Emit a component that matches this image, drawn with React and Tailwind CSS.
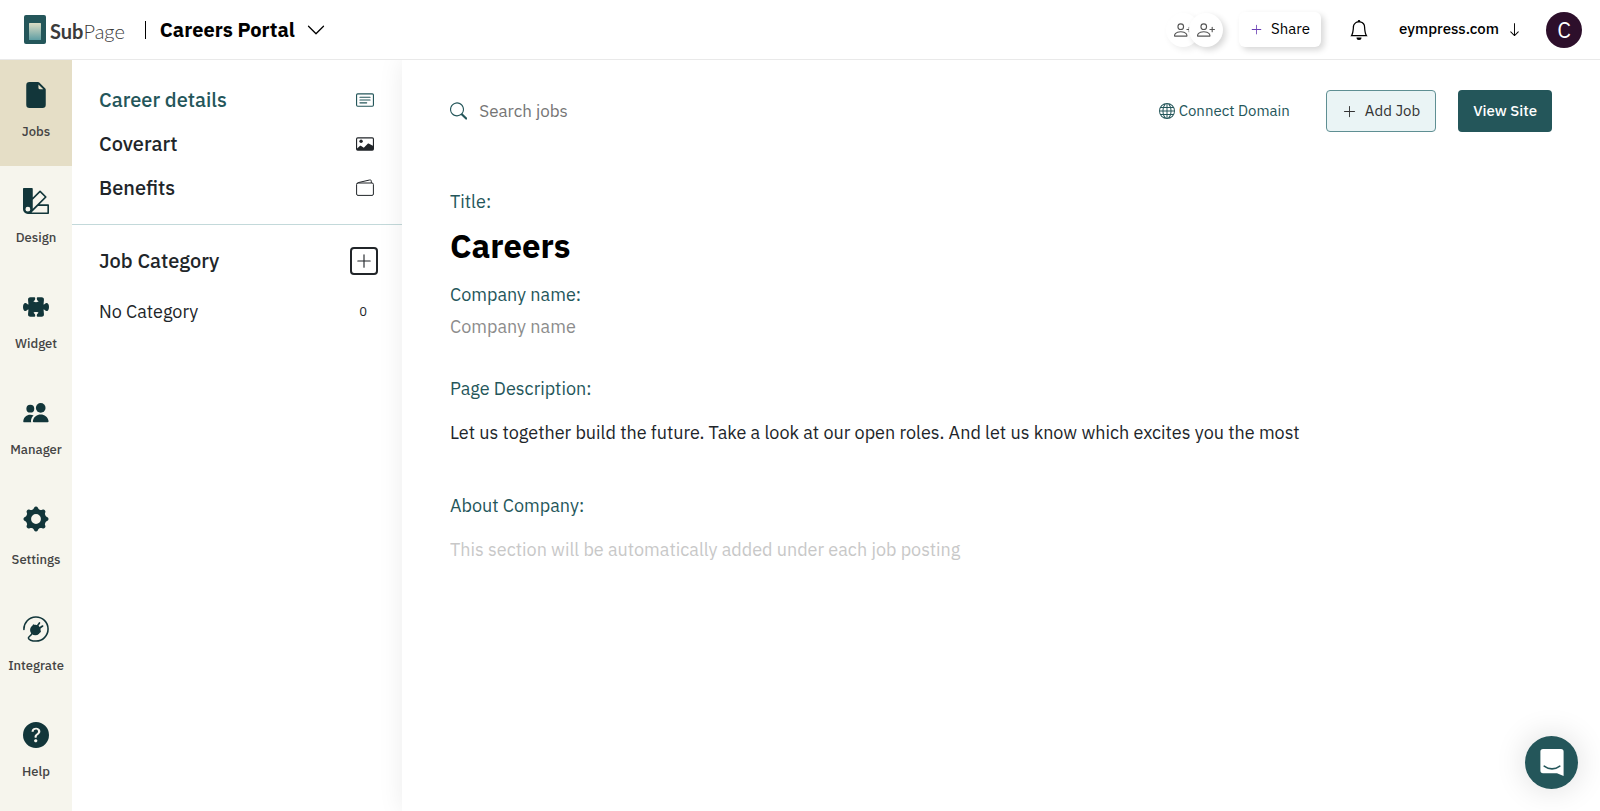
import {
  BsArrowDown,
  BsBell,
  BsCardImage,
  BsCardText,
  BsChevronDown,
  BsFileEarmarkFill,
  BsGlobe,
  BsPalette2,
  BsPersonPlus,
  BsPlusLg,
  BsPuzzleFill,
  BsQuestionCircleFill,
  BsSearch,
} from "react-icons/bs";

function Logo() {
  return (
    <a href="#" className="flex items-center gap-1 text-[#3b3b3b]">
      <svg width="22" height="29" viewBox="0 0 22 29" aria-hidden="true">
        <defs>
          <linearGradient id="page" x1="0" y1="0" x2="0" y2="1">
            <stop offset="0" stopColor="#dcdcc4" />
            <stop offset="1" stopColor="#5f9ea3" />
          </linearGradient>
        </defs>
        <rect width="22" height="29" rx="2" fill="#24565a" />
        <rect x="5" y="8" width="12" height="17" rx="0.5" fill="url(#page)" />
      </svg>
      <span className="pt-0.5 font-[Lato,sans-serif] text-xl leading-6 font-light">
        <span className="font-bold">Sub</span>Page
      </span>
    </a>
  );
}

function PeopleIcon({ className }) {
  return (
    <svg viewBox="0 0 27 27" className={className} fill="currentColor" aria-hidden="true">
      <circle cx="7.600" cy="9" r="4.100" />
      <circle cx="18.400" cy="8.200" r="5" />
      <path d="M11.200 23c-.9 0-1.100-.8-.9-1.500C11.300 17.400 14.300 15 18.400 15s7.100 2.400 8.100 6.500c.2.700 0 1.500-.9 1.500z" />
      <path d="M1.200 23c-.8 0-1.100-.7-.9-1.300C1 17.800 3.600 15.400 7.600 15.400c1.300 0 2.400.2 3.400.7c-1.600 1.400-2.500 3.300-2.700 5.300c0 .6 0 1.100.2 1.600z" />
    </svg>
  );
}

function GearIcon({ className }) {
  return (
    <svg viewBox="0 0 28 28" className={className} aria-hidden="true">
      <circle cx="14" cy="14" r="8.100" fill="none" stroke="currentColor" strokeWidth="5.600" />
      <g fill="currentColor">
        {[0, 45, 90, 135, 180, 225, 270, 315].map((angle) => (
          <path key={angle} transform={`rotate(${angle} 14 14)`} d="M9.400 5c1.600-.8 2-2.200 2.700-3.400a2.200 2.200 0 0 1 3.800 0c.7 1.200 1.100 2.600 2.700 3.400z" />
        ))}
      </g>
    </svg>
  );
}

function PlugIcon({ className }) {
  return (
    <svg viewBox="0 0 28 28" className={className} fill="none" stroke="currentColor" strokeLinecap="round" aria-hidden="true">
      <path
        strokeWidth="1.700"
        d="M1 14.500A13 13 0 1 1 13.800 27C9.500 27 5.800 25.500 5.800 23.700c0-1.500 2.500-2 4.200-5.200"
      />
      <circle cx="13.300" cy="15" r="5.700" fill="currentColor" stroke="none" />
      <path strokeWidth="2.400" d="M11.500 10.200L18 16.700" />
      <path strokeWidth="1.800" d="M14.500 12l3.200-4.500M16.500 14l4.600-3.200" />
    </svg>
  );
}

function WalletIcon({ className }) {
  return (
    <svg viewBox="0 0 18 18" className={className} fill="none" stroke="currentColor" aria-hidden="true">
      <rect x="0.600" y="4" width="16.800" height="12.400" rx="1.400" />
      <path d="M1 4.800C1.500 3.700 2.500 3.500 4 3.200L13.500 1c1.200-.3 1.800.2 1.800 1.200v1.800" />
    </svg>
  );
}

function ChatIcon({ className }) {
  return (
    <svg viewBox="0 0 24 28" className={className} aria-hidden="true">
      <path fill="#fff" d="M3 0h18a2.600 2.600 0 0 1 2.600 2.600V27l-6.600-2.800H3A2.600 2.600 0 0 1 .4 21.600V2.600A2.600 2.600 0 0 1 3 0z" />
      <path d="M4.200 17.200c4.600 3.600 11 3.600 15.600 0" fill="none" stroke="#24565a" strokeWidth="1.600" strokeLinecap="round" />
    </svg>
  );
}

const tools = [
  { name: "Jobs", Icon: BsFileEarmarkFill, active: true },
  { name: "Design", Icon: BsPalette2 },
  { name: "Widget", Icon: BsPuzzleFill },
  { name: "Manager", Icon: PeopleIcon },
  { name: "Settings", Icon: GearIcon },
  { name: "Integrate", Icon: PlugIcon },
  { name: "Help", Icon: BsQuestionCircleFill },
];

const sections = [
  { name: "Career details", Icon: BsCardText, active: true },
  { name: "Coverart", Icon: BsCardImage },
  { name: "Benefits", Icon: WalletIcon },
];

function Header() {
  return (
    <header className="relative z-10 flex h-15 shrink-0 items-center justify-between border-b border-[#e9e9e9] bg-white pr-[18px] pl-6">
      <div className="flex items-center">
        <Logo />
        <span className="mr-[14px] ml-5 h-[18px] w-px bg-black" />
        <button className="flex items-center gap-[11px] text-xl font-bold text-black">
          Careers Portal
          <BsChevronDown className="size-5" />
        </button>
      </div>
      <div className="flex items-center">
        <div className="mr-4 flex text-[#555]">
          <button aria-label="Invite editor" className="flex size-[34px] items-center justify-center rounded-full bg-white shadow-[3px_3px_6px_rgba(0,0,0,0.08)]">
            <BsPersonPlus className="size-[18px]" />
          </button>
          <button aria-label="Invite viewer" className="-ml-[11px] flex size-[34px] items-center justify-center rounded-full bg-white shadow-[3px_3px_6px_rgba(0,0,0,0.16)]">
            <BsPersonPlus className="size-[18px]" />
          </button>
        </div>
        <button className="flex h-[35px] items-center gap-2 rounded-md bg-white px-[11px] text-[15px] text-black shadow-[3px_3px_6px_rgba(0,0,0,0.16)]">
          <BsPlusLg className="size-[13px] text-[#6a3fb5]" />
          Share
        </button>
        <button aria-label="Notifications" className="ml-7 text-black">
          <BsBell className="size-5" />
        </button>
        <button className="ml-[30px] flex items-center gap-2 text-[15px] font-medium text-black">
          eympress.com
          <BsArrowDown className="size-[15px]" />
        </button>
        <button aria-label="Account" className="ml-6 size-9 rounded-full bg-[#2d0f2b] text-[22px] leading-9 text-white">
          C
        </button>
      </div>
    </header>
  );
}

function Toolbar() {
  return (
    <nav className="w-18 shrink-0 bg-[#f6f5ed]">
      {tools.map(({ name, Icon, active }) => (
        <a
          key={name}
          href="#"
          className={`flex flex-col items-center pt-[22px] pb-6 text-[13px] leading-5 font-medium text-[#444] ${active ? "bg-[#e5dec6]" : ""}`}
        >
          <Icon className={`size-[26px] text-[#12363a] ${name === "Settings" ? "mb-[18px]" : "mb-[14px]"}`} />
          {name}
        </a>
      ))}
    </nav>
  );
}

function SidePanel() {
  return (
    <aside className="w-[330px] shrink-0">
      <ul className="flex flex-col gap-4 border-b border-[#c3d9da] pt-[26px] pr-7 pb-[22px] pl-[27px]">
        {sections.map(({ name, Icon, active }) => (
          <li key={name}>
            <a
              href="#"
              className={`flex items-center justify-between text-xl leading-7 font-medium ${active ? "text-[#24565a]" : "text-[#212529]"}`}
            >
              {name}
              <Icon className="size-[18px]" />
            </a>
          </li>
        ))}
      </ul>
      <div className="flex items-center justify-between pt-[22px] pr-6 pl-[27px] text-[#212529]">
        <h2 className="text-xl leading-7 font-medium">Job Category</h2>
        <button aria-label="Add category" className="flex size-7 items-center justify-center rounded-sm border-2 border-[#212529]">
          <BsPlusLg className="size-[18px]" />
        </button>
      </div>
      <div className="flex items-center justify-between pt-[23px] pr-[35px] pl-[27px] text-[#212529]">
        <span className="text-lg leading-7">No Category</span>
        <span className="text-[13px]">0</span>
      </div>
    </aside>
  );
}

function Main() {
  return (
    <main className="flex-1 pt-[30px] pr-12 pl-12 shadow-[0_0_24px_rgba(0,0,0,0.08)]">
      <div className="flex items-center">
        <label className="flex flex-1 items-center gap-3 text-[#24565a]">
          <BsSearch className="size-[18px]" />
          <input
            type="search"
            aria-label="Search jobs"
            placeholder="Search jobs"
            className="w-full text-[17px] leading-6 outline-none placeholder:text-[#757575]"
          />
        </label>
        <a href="#" className="mr-9 flex items-center gap-1 text-[15px] text-[#24565a]">
          <BsGlobe className="size-4" />
          Connect Domain
        </a>
        <button className="mr-[22px] flex h-[42px] items-center gap-2 rounded-sm border border-[#5f8f93] bg-[#eaf4f5] px-[15px] text-[15px] text-[#333]">
          <BsPlusLg className="size-[15px]" />
          Add Job
        </button>
        <button className="h-[42px] rounded-sm bg-[#24565a] px-[15px] text-[15px] font-medium text-white">View Site</button>
      </div>

      <form className="mt-14 flex flex-col text-lg leading-7">
        <label htmlFor="title" className="text-[#24565a]">Title:</label>
        <input id="title" defaultValue="Careers" className="mt-[5px] h-12 text-[33px] font-bold text-black outline-none" />
        <label htmlFor="company" className="mt-3 text-[#24565a]">Company name:</label>
        <input id="company" placeholder="Company name" className="mt-1 h-7 outline-none placeholder:text-[#8c8c8c]" />
        <label htmlFor="description" className="mt-[34px] text-[#24565a]">Page Description:</label>
        <textarea
          id="description"
          rows={1}
          defaultValue="Let us together build the future. Take a look at our open roles. And let us know which excites you the most"
          className="mt-4 resize-none overflow-hidden text-[#212529] outline-none"
        />
        <label htmlFor="about" className="mt-[45px] text-[#24565a]">About Company:</label>
        <textarea
          id="about"
          rows={1}
          placeholder="This section will be automatically added under each job posting"
          className="mt-4 resize-none overflow-hidden outline-none placeholder:text-[#c8c8c8]"
        />
      </form>
    </main>
  );
}

export default function App() {
  return (
    <div className="flex min-h-screen flex-col bg-white font-['IBM_Plex_Sans',Roboto,sans-serif]">
      <Header />
      <div className="flex flex-1">
        <Toolbar />
        <SidePanel />
        <Main />
      </div>
      <button
        aria-label="Open chat"
        className="fixed right-[22px] bottom-[22px] flex size-[53px] items-center justify-center rounded-full bg-[#24565a] shadow-[0_0_32px_rgba(0,0,0,0.14)]"
      >
        <ChatIcon className="h-7 w-6" />
      </button>
    </div>
  );
}
